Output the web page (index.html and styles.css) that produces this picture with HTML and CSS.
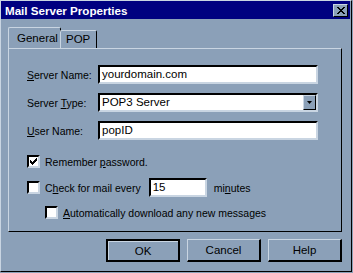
FILE: index.html
```html
<!DOCTYPE html>
<html lang="en">
<head>
  <meta charset="UTF-8" />
  <title>Mail Server Properties</title>
  <link rel="stylesheet" href="styles.css">
</head>
<body>
  <div class="window">
    <div class="titlebar">
      <span class="title">Mail Server Properties</span>
      <span class="close">
        <svg width="8" height="7" viewBox="0 0 8 7"><path d="M0 0h2v1h1v1h2v-1h1v-1h2v1h-1v1h-1v1h-1v1h1v1h1v1h1v1h-2v-1h-1v-1h-2v1h-1v1h-2v-1h1v-1h1v-1h1v-1h-1v-1h-1v-1h-1z" fill="#000"/></svg>
      </span>
    </div>

    <div class="tabs">
      <div class="tab active">General</div>
      <div class="tab">POP</div>
    </div>

    <div class="panel">
      <div class="row">
        <label class="lbl"><u>S</u>erver Name:</label>
        <div class="field">yourdomain.com</div>
      </div>
      <div class="row">
        <label class="lbl">Server <u>T</u>ype:</label>
        <div class="field select">POP3 Server
          <span class="drop"><svg width="5" height="3" viewBox="0 0 5 3"><path d="M0 0h5l-2.5 3z" fill="#000"/></svg></span>
        </div>
      </div>
      <div class="row">
        <label class="lbl"><u>U</u>ser Name:</label>
        <div class="field">popID</div>
      </div>

      <div class="check first">
        <span class="box"><svg width="7" height="7" viewBox="0 0 7 7"><path d="M0 2h1v1h1v1h1v-1h1v-1h1v-1h1v-1h1v3h-1v1h-1v1h-1v1h-1v1h-1v-1h-1v-1h-1z" fill="#000"/></svg></span>
        <span>Remember <u>p</u>assword.</span>
      </div>
      <div class="check">
        <span class="box"></span>
        <span>C<u>h</u>eck for mail every</span>
        <div class="field small">15</div>
        <span class="unit">mi<u>n</u>utes</span>
      </div>
      <div class="check indent">
        <span class="box"></span>
        <span><u>A</u>utomatically download any new messages</span>
      </div>
    </div>

    <div class="buttons">
      <button>OK</button>
      <button>Cancel</button>
      <button>Help</button>
    </div>
  </div>
</body>
</html>
```

FILE: styles.css
```css
body {
  margin: 0;
  background: #8ba0b8;
  font-family: "Liberation Sans", Arial, sans-serif;
  font-size: 10.5px;
  color: #000;
}
.window {
  width: 350px;
  height: 270px;
  border-top: 1px solid #c9d5e2;
  border-left: 1px solid #c9d5e2;
  border-right: 1px solid #000;
  border-bottom: 1px solid #000;
  background: #8ba0b8;
}
.titlebar {
  height: 18px;
  margin: 0 1px 0 0;
  background: #000080;
  display: flex;
  align-items: center;
  justify-content: space-between;
  padding: 0 2px 0 4px;
}
.title {
  color: #fff;
  font-weight: bold;
  font-size: 11.6px;
}
.close {
  width: 13px;
  height: 11px;
  background: #8ba0b8;
  border-top: 1px solid #c9d5e2;
  border-left: 1px solid #c9d5e2;
  border-right: 1px solid #000;
  border-bottom: 1px solid #000;
  display: flex;
  align-items: center;
  justify-content: center;
}
.tabs {
  display: flex;
  align-items: flex-end;
  margin: 9px 0 0 7px;
  height: 20px;
  font-size: 11.5px;
}
.tab {
  padding: 0 8px;
  height: 17px;
  line-height: 16px;
  border-top: 1px solid #c9d5e2;
  border-left: 1px solid #c9d5e2;
  border-right: 1px solid #000;
  border-radius: 2px 2px 0 0;
}
.tab.active {
  height: 20px;
  line-height: 20px;
  padding: 0 8px 0 8px;
  width: 35px;
}
.tab:not(.active) {
  width: 22px;
  padding: 0 8px 0 5px;
  margin-left: -1px;
}
.panel {
  margin-left: 7px;
  width: 314px;
  height: 182px;
  border-left: 1px solid #c9d5e2;
  border-top: 1px solid #c9d5e2;
  border-right: 1px solid #000;
  border-bottom: 1px solid #000;
  padding: 0 0 0 18px;
  box-sizing: content-box;
}
.row {
  display: flex;
  align-items: center;
  margin-top: 9px;
}
.row:first-child {
  margin-top: 16px;
}
.lbl {
  width: 71px;
}
.field {
  background: #fff;
  width: 212px;
  height: 15px;
  line-height: 15px;
  padding: 0 2px;
  font-size: 11.5px;
  border-top: 2px solid #000;
  border-left: 2px solid #000;
  border-right: 2px solid #c9d5e2;
  border-bottom: 2px solid #c9d5e2;
  display: flex;
  align-items: center;
  justify-content: space-between;
}
.select {
  padding-right: 0;
  width: 214px;
}
.drop {
  width: 11px;
  height: 13px;
  background: #8ba0b8;
  border-top: 1px solid #c9d5e2;
  border-left: 1px solid #c9d5e2;
  border-right: 1px solid #000;
  border-bottom: 1px solid #000;
  display: flex;
  align-items: center;
  justify-content: center;
}
.check {
  display: flex;
  align-items: center;
  height: 19px;
  margin-top: 7px;
}
.check.first {
  margin-top: 12px;
}
.check.indent {
  margin-left: 18px;
  margin-top: 6px;
}
.box {
  width: 9px;
  height: 9px;
  background: #fff;
  border-top: 2px solid #000;
  border-left: 2px solid #000;
  border-right: 2px solid #c9d5e2;
  border-bottom: 2px solid #c9d5e2;
  margin-right: 5px;
  display: flex;
  align-items: center;
  justify-content: center;
}
.field.small {
  width: 50px;
  margin-left: 8px;
  justify-content: flex-start;
}
.unit {
  margin-left: 7px;
}
.buttons {
  display: flex;
  justify-content: flex-end;
  gap: 7px;
  margin: 7px 9px 0 0;
}
button {
  width: 74px;
  height: 23px;
  background: #8ba0b8;
  font-family: inherit;
  font-size: 11.5px;
  border-top: 1px solid #c9d5e2;
  border-left: 1px solid #c9d5e2;
  border-right: 2px solid #000;
  border-bottom: 2px solid #000;
  padding: 0;
}
button:first-child {
  border: 2px solid #000;
  box-shadow: inset 1px 1px #c9d5e2;
}
```
